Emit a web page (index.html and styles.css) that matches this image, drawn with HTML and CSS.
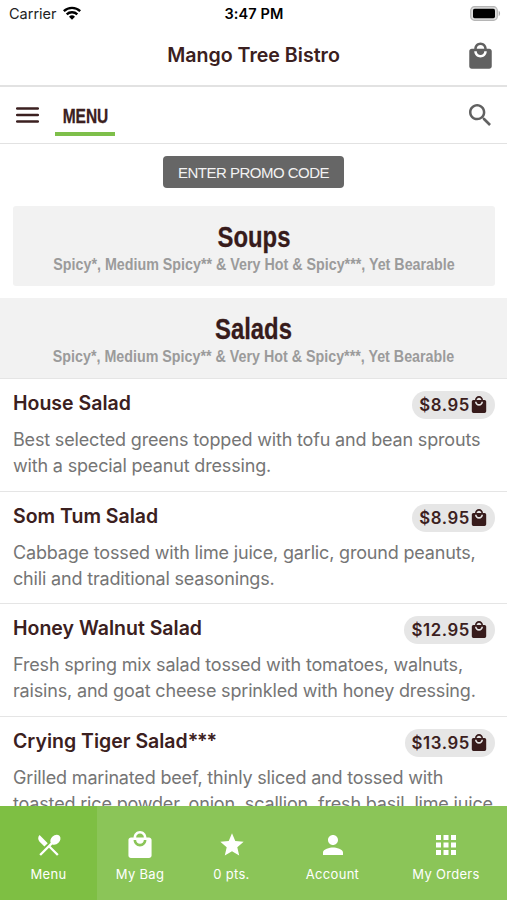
FILE: index.html
```html
<!DOCTYPE html>
<html lang="en">
<head>
<meta charset="utf-8">
<title>Mango Tree Bistro</title>
<link rel="stylesheet" href="styles.css">
</head>
<body>
<svg class="defs" aria-hidden="true">
  <symbol id="bag" viewBox="2 1 20 21"><path d="M19 6h-2c0-2.760-2.240-5-5-5S7 3.240 7 6H5c-1.100 0-1.990.9-1.990 2L3 20c0 1.100.9 2 2 2h14c1.100 0 2-.9 2-2V8c0-1.100-.9-2-2-2zm-7-3c1.660 0 3 1.340 3 3H9c0-1.660 1.340-3 3-3zm0 10c-2.760 0-5-2.240-5-5h2c0 1.660 1.340 3 3 3s3-1.340 3-3h2c0 2.760-2.240 5-5 5z"/></symbol>
</svg>
<div class="app">
  <div class="status">
    <span class="carrier">Carrier</span>
    <svg class="wifi" viewBox="0 0 18 14"><g fill="none" stroke="#000" stroke-width="2.400"><path d="M.8 5.200a11.800 11.800 0 0 1 16.400 0"/><path d="M3.700 8.400a7.600 7.600 0 0 1 10.600 0"/></g><path d="M9 13.700l-3-3a4.300 4.300 0 0 1 6 0z"/></svg>
    <span class="time">3:47 PM</span>
    <svg class="battery" viewBox="0 0 31 15"><rect x=".7" y=".7" width="26.600" height="13.600" rx="3.800" fill="#ddd" stroke="#b5b5b5" stroke-width="1.200"/><path d="M28.700 4.800c1.800.8 1.800 4.600 0 5.400z" fill="#aaa"/><rect x="3" y="2.800" width="22" height="9.400" rx="1.600"/></svg>
  </div>
  <header class="header">
    <h1 class="title">Mango Tree Bistro</h1>
    <svg class="header-bag"><use href="#bag"/></svg>
  </header>
  <nav class="subnav">
    <svg class="burger" viewBox="0 0 23 16"><path d="M1.200 1.500h20.600M1.200 8h20.600M1.200 14.500h20.600" stroke="#3b2020" stroke-width="2.500" stroke-linecap="round"/></svg>
    <div class="tab"><span class="narrow tab-text">MENU</span></div>
    <svg class="search" viewBox="3 3 17.500 17.500"><path d="M15.500 14h-.79l-.28-.27C15.410 12.590 16 11.110 16 9.500 16 5.910 13.090 3 9.500 3S3 5.910 3 9.500 5.910 16 9.500 16c1.610 0 3.090-.59 4.230-1.570l.27.28v.79l5 4.990L20.490 19l-4.990-5zm-6 0C7.010 14 5 11.990 5 9.500S7.010 5 9.500 5 14 7.010 14 9.500 11.990 14 9.500 14z"/></svg>
  </nav>
  <main class="content">
    <button class="promo">ENTER PROMO CODE</button>
    <section class="category card">
      <h2 class="narrow cat-name">Soups</h2>
      <p class="narrow cat-note">Spicy*, Medium Spicy** &amp; Very Hot &amp; Spicy***, Yet Bearable</p>
    </section>
    <section class="category open">
      <h2 class="narrow cat-name">Salads</h2>
      <p class="narrow cat-note">Spicy*, Medium Spicy** &amp; Very Hot &amp; Spicy***, Yet Bearable</p>
    </section>
    <article class="item">
      <div class="row"><h3 class="name">House Salad</h3><div class="price">$8.95<svg class="mini"><use href="#bag"/></svg></div></div>
      <p class="desc">Best selected greens topped with tofu and bean sprouts<br>with a special peanut dressing.</p>
    </article>
    <article class="item">
      <div class="row"><h3 class="name">Som Tum Salad</h3><div class="price">$8.95<svg class="mini"><use href="#bag"/></svg></div></div>
      <p class="desc">Cabbage tossed with lime juice, garlic, ground peanuts,<br>chili and traditional seasonings.</p>
    </article>
    <article class="item">
      <div class="row"><h3 class="name">Honey Walnut Salad</h3><div class="price">$12.95<svg class="mini"><use href="#bag"/></svg></div></div>
      <p class="desc">Fresh spring mix salad tossed with tomatoes, walnuts,<br>raisins, and goat cheese sprinkled with honey dressing.</p>
    </article>
    <article class="item">
      <div class="row"><h3 class="name">Crying Tiger Salad<span class="stars">***</span></h3><div class="price">$13.95<svg class="mini"><use href="#bag"/></svg></div></div>
      <p class="desc">Grilled marinated beef, thinly sliced and tossed with<br>toasted rice powder, onion, scallion, fresh basil, lime juice</p>
    </article>
  </main>
  <footer class="tabs">
    <div class="tabitem active"><svg class="ico" viewBox="0 0 24 24"><path d="M8.100 13.340l2.830-2.830L3.910 3.500c-1.560 1.560-1.560 4.090 0 5.660l4.190 4.180zm6.780-1.810c1.530.71 3.680.21 5.270-1.380 1.910-1.910 2.280-4.650.81-6.120-1.460-1.460-4.200-1.100-6.120.81-1.590 1.590-2.090 3.740-1.380 5.270L3.700 19.870l1.410 1.410L12 14.410l6.880 6.880 1.410-1.410L13.410 13l1.470-1.470z"/></svg><span>Menu</span></div>
    <div class="tabitem"><svg class="ico bagico"><use href="#bag"/></svg><span>My Bag</span></div>
    <div class="tabitem"><svg class="ico" viewBox="0 0 24 24"><path d="M12 17.270L18.180 21l-1.640-7.030L22 9.240l-7.190-.61L12 2 9.190 8.630 2 9.240l5.460 4.730L5.820 21z"/></svg><span>0 pts.</span></div>
    <div class="tabitem"><svg class="ico large" viewBox="0 0 24 24"><path d="M12 12c2.210 0 4-1.790 4-4s-1.790-4-4-4-4 1.790-4 4 1.790 4 4 4zm0 2c-2.670 0-8 1.340-8 4v2h16v-2c0-2.660-5.330-4-8-4z"/></svg><span>Account</span></div>
    <div class="tabitem"><svg class="ico large" viewBox="0 0 24 24"><path d="M4 8h4V4H4v4zm6 12h4v-4h-4v4zm-6 0h4v-4H4v4zm0-6h4v-4H4v4zm6 0h4v-4h-4v4zm6-10v4h4V4h-4zm-6 4h4V4h-4v4zm6 6h4v-4h-4v4zm0 6h4v-4h-4v4z"/></svg><span>My Orders</span></div>
  </footer>
</div>
</body>
</html>
```
FILE: styles.css
```css
* { box-sizing: border-box; }
body { margin: 0; background: #fff; font-family: Inter, "Liberation Sans", sans-serif; }
h1, h2, h3, p { margin: 0; font-weight: 600; }
svg { display: block; flex: none; }
.defs { position: absolute; width: 0; height: 0; }
.app { width: 507px; height: 900px; display: flex; flex-direction: column; overflow: hidden; }
.narrow { font-family: "Liberation Sans", sans-serif; font-weight: 700; white-space: nowrap; }

.status { height: 28px; flex: none; display: grid; grid-template-columns: auto 18px 1fr 31px; align-items: center; padding: 0 6px 1px 9px; column-gap: 6px; font-size: 14.500px; color: #000; }
.carrier { color: #222; }
.wifi { width: 18px; height: 14px; margin-top: -1px; }
.time { font-weight: 600; letter-spacing: .1px; padding-left: 138px; }
.battery { width: 31px; height: 15px; }

.header { height: 59px; flex: none; display: grid; grid-template-columns: 25px 1fr 25px; align-items: center; padding: 0 14px 2px; border-bottom: 2px solid #e2e2e2; }
.title { grid-column: 2; text-align: center; font-size: 19.600px; margin-top: -2px; color: #3b2020; }
.header-bag { width: 25px; height: 27px; fill: #616161; }

.subnav { height: 57px; flex: none; display: flex; align-items: center; padding: 0 16px; border-bottom: 1px solid #e2e2e2; }
.burger { width: 23px; height: 16px; }
.tab { width: 60px; height: 32px; margin: 10px auto 0 16px; border-bottom: 4px solid #7ebf4a; display: flex; justify-content: center; align-items: flex-start; }
.tab-text { font-size: 20px; line-height: 24px; color: #3b2020; transform: scaleX(.775); -webkit-text-stroke: .3px #3b2020; }
.search { width: 22px; height: 22px; fill: #616161; }

.content { flex: 1; min-height: 0; overflow: hidden; padding-top: 12px; }
.promo { display: block; width: 181px; height: 32px; margin: 0 auto 18px; padding: 0; border: 0; border-radius: 4px; background: #666; color: #f3f3f3; font: 15px "Liberation Sans", sans-serif; letter-spacing: -.5px; }
.category { height: 81px; background: #f2f2f2; text-align: center; padding-top: 13px; }
.card { margin: 0 12px 12px 13px; height: 80px; border-radius: 3px; }
.cat-name { font-size: 30px; line-height: 36px; color: #371b1b; transform: scaleX(.795); -webkit-text-stroke: .3px #371b1b; }
.cat-note { font-size: 17px; line-height: 20px; color: #9b9b9b; transform: scaleX(.84); }

.item { height: 112.400px; border-top: 1px solid #e5e5e5; padding: 12px 12px 0 13px; }
.open + .item { margin-top: -.6px; }
.row { display: flex; justify-content: space-between; height: 36px; }
.name { font-size: 19.500px; line-height: 24px; color: #3b2020; }
.stars { letter-spacing: -1.200px; }
.price { height: 28px; border-radius: 14px; background: #e6e6e6; display: flex; align-items: center; padding: 0 8px 0 7px; font-size: 16.800px; font-weight: 600; letter-spacing: .6px; color: #3b2020; }
.mini { width: 16px; height: 17px; fill: #371b1b; margin: 0 0 1px 1px; }
.desc { font-size: 18px; font-weight: 400; line-height: 26px; letter-spacing: -.17px; color: #757575; white-space: nowrap; }

.tabs { height: 94px; flex: none; display: grid; grid-template-columns: 97px 86px 97px 105px 1fr; background: #8bc558; color: #fff; }
.tabitem { display: flex; flex-direction: column; align-items: center; padding-top: 25px; font-size: 13px; line-height: 18px; letter-spacing: .3px; }
.active { background: #7ebf43; }
.ico { width: 28px; height: 28px; margin-bottom: 6px; fill: #fff; }
.bagico { width: 26px; height: 27px; margin: 0 0 7px; }
.large { width: 30px; height: 30px; margin: -1px 0 5px; }
```
